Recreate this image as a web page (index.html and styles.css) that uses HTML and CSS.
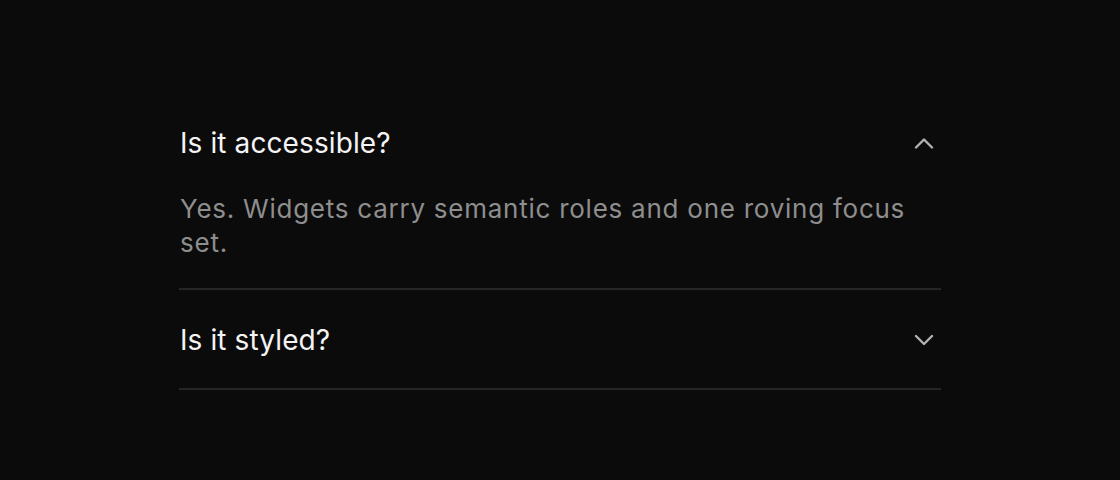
FILE: index.html
```html
<!DOCTYPE html>
<html lang="en">
<head>
<meta charset="utf-8">
<title>FAQ</title>
<link rel="stylesheet" href="styles.css">
</head>
<body>
<main class="page">
  <section class="accordion">
    <div class="item open">
      <button class="trigger" aria-expanded="true">
        <span class="q">Is it accessible?</span>
        <svg class="chev" viewBox="0 0 20 12" width="20" height="12"><path d="M2 10.5 L10 2.5 L18 10.5" /></svg>
      </button>
      <p class="answer">Yes. Widgets carry semantic roles and one roving focus set.</p>
    </div>
    <div class="item">
      <button class="trigger" aria-expanded="false">
        <span class="q">Is it styled?</span>
        <svg class="chev" viewBox="0 0 20 12" width="20" height="12"><path d="M2 2 L10 10 L18 2" /></svg>
      </button>
    </div>
  </section>
</main>
</body>
</html>
```

FILE: styles.css
```css
html, body {
  margin: 0;
  background: #0b0b0b;
  height: 100%;
}
body {
  font-family: Inter, "Liberation Sans", sans-serif;
  color: #f2f2f2;
}
.page {
  padding-top: 93px;
}
.accordion {
  width: 762px;
  margin: 0 auto;
}
.item {
  border-bottom: 2px solid #262626;
}
.trigger {
  all: unset;
  box-sizing: border-box;
  width: 100%;
  display: flex;
  align-items: center;
  justify-content: space-between;
  padding: 33px 7px 31px 1px;
  font-family: inherit;
  font-size: 28px;
  line-height: 34px;
  letter-spacing: 0.1px;
  color: #f4f4f4;
}
.chev {
  fill: none;
  stroke: #b2b2b2;
  stroke-width: 2.4;
  stroke-linecap: round;
  stroke-linejoin: round;
}
.answer {
  margin: 0;
  padding: 1px 30px 28px 1px;
  font-size: 26px;
  line-height: 34px;
  letter-spacing: 0.75px;
  color: #8e8e8e;
}
```
